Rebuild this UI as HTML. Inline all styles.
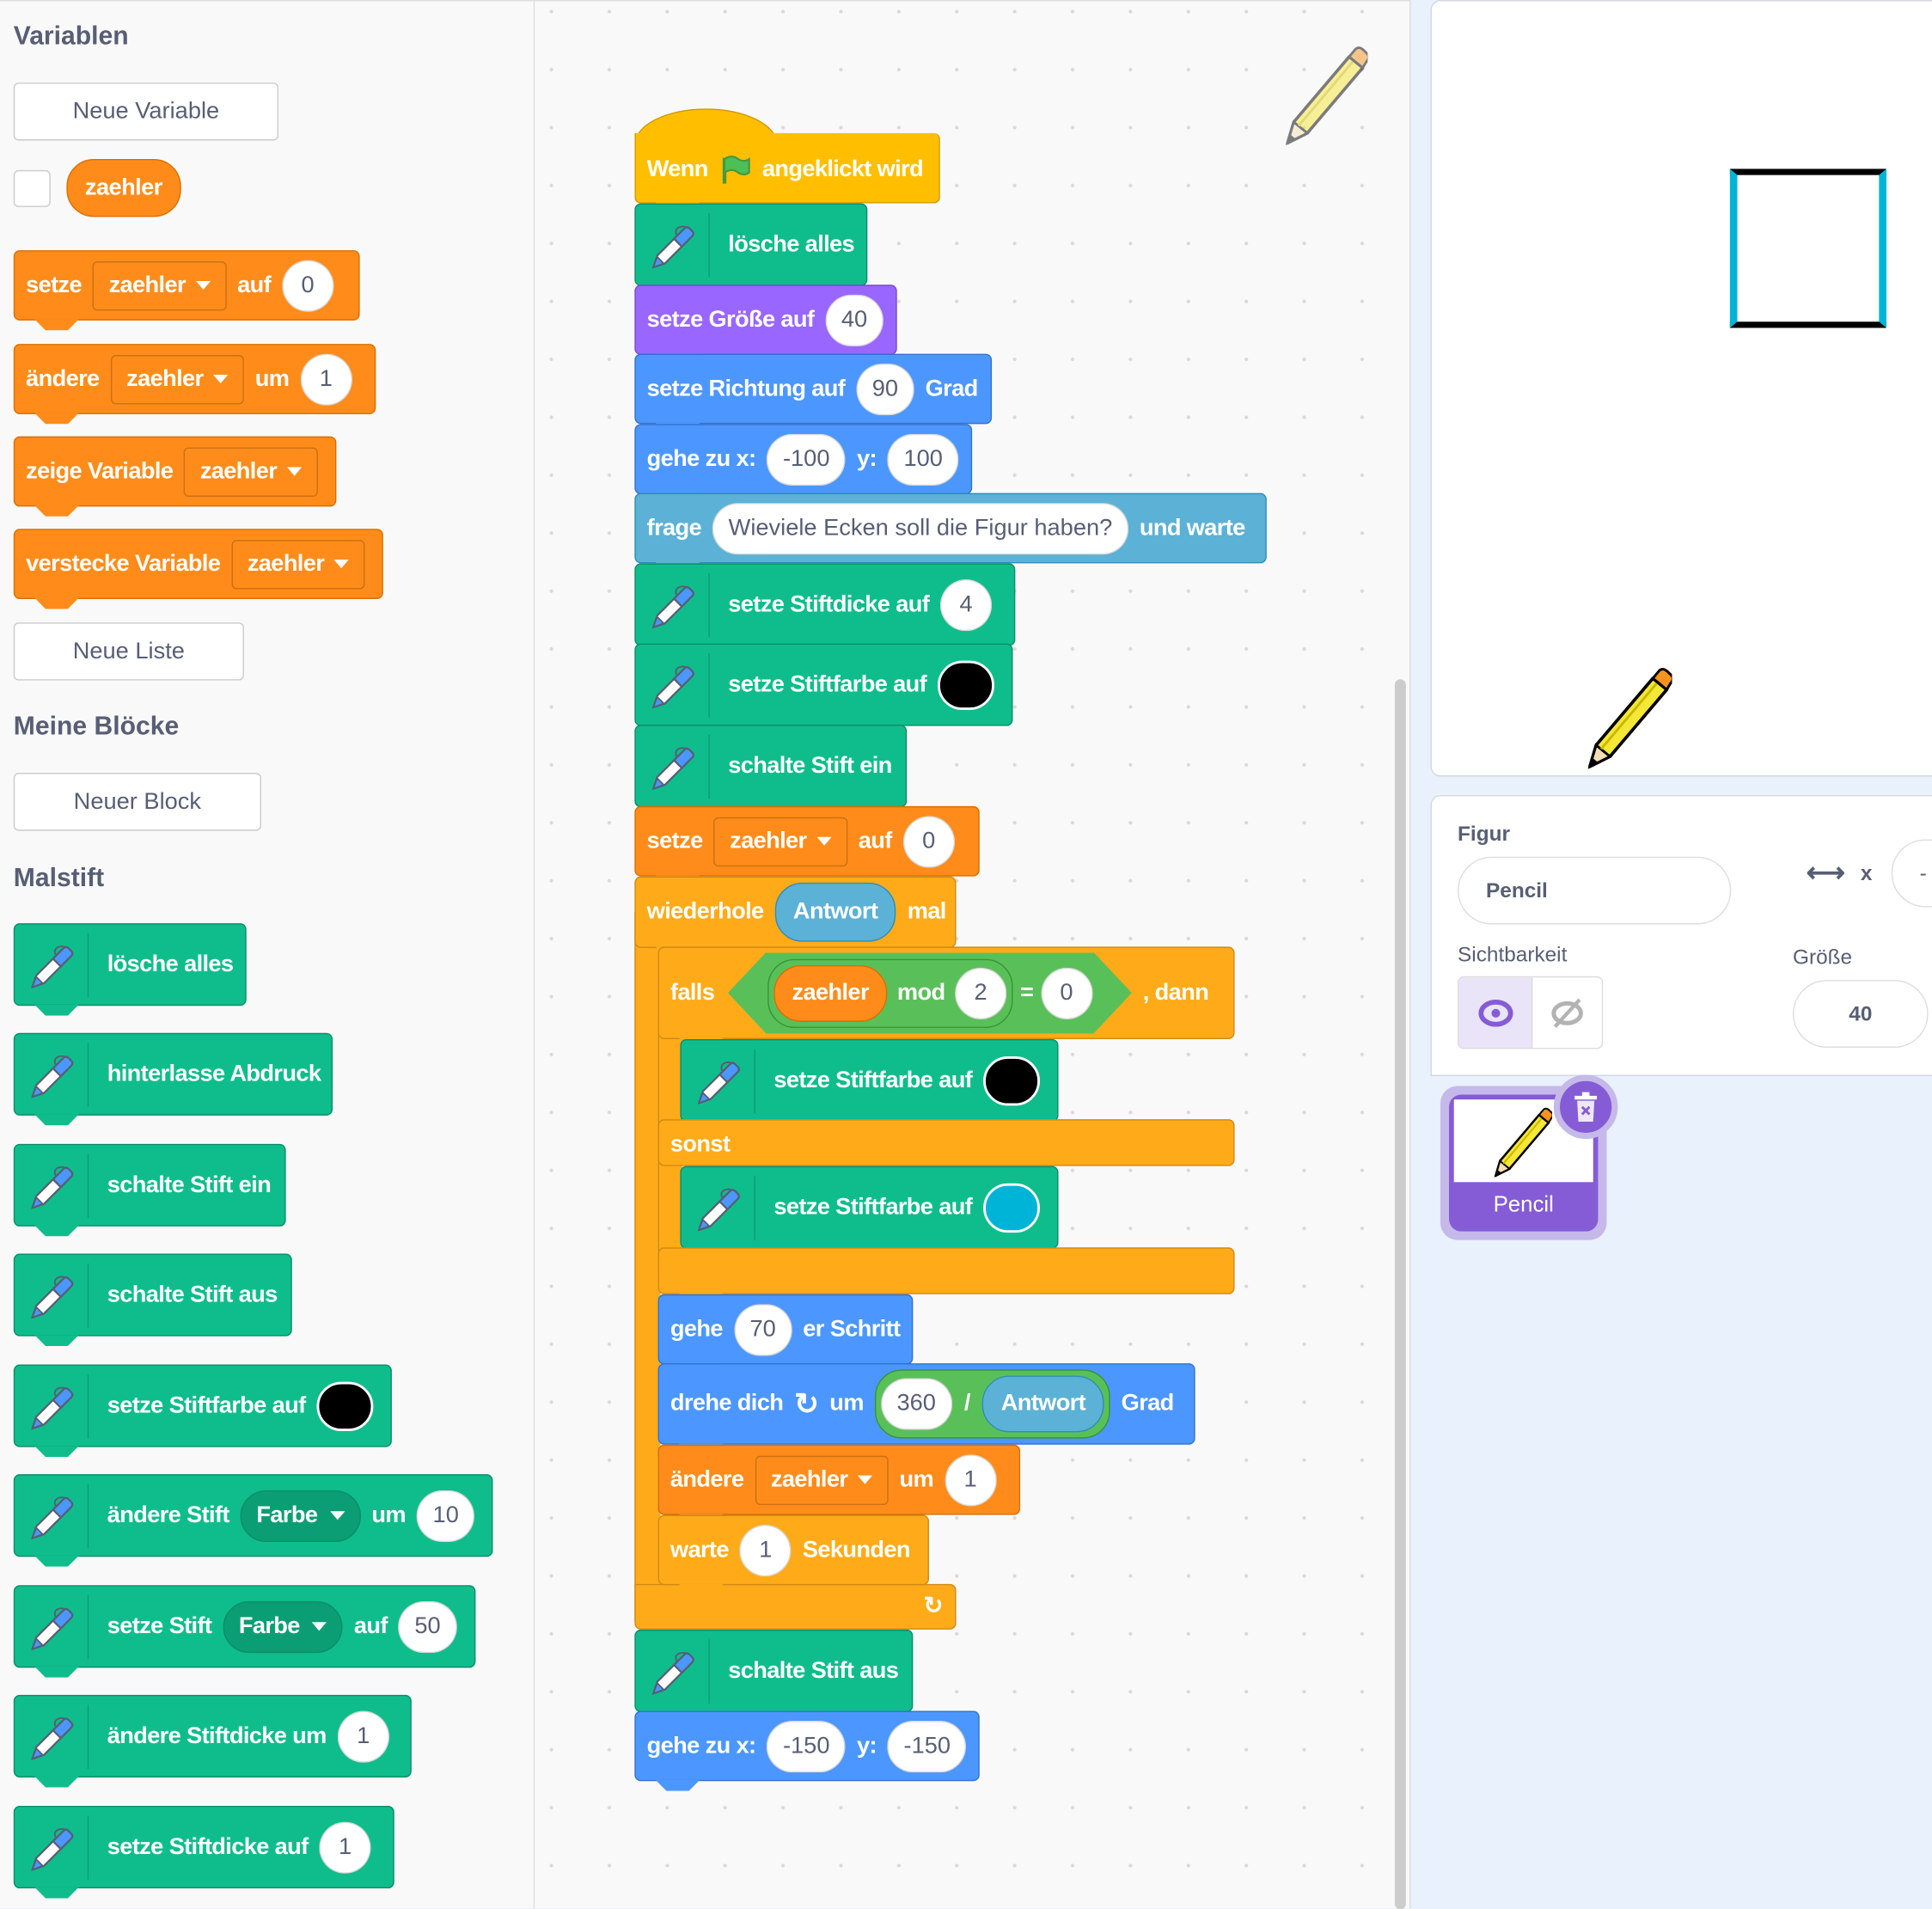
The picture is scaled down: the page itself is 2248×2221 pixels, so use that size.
<!DOCTYPE html>
<html><head><meta charset="utf-8">
<style>
*{box-sizing:border-box;margin:0;padding:0}
html,body{width:2248px;height:2220px;overflow:hidden;background:#e9f1fc}
#w{position:absolute;left:0;top:0;width:1568px;height:1548px;transform:scale(1.43367,1.4341);transform-origin:0 0;font-family:"Liberation Sans",sans-serif;}
.pal{position:absolute;left:0;top:0;width:434px;height:1548px;background:#f9f9f9;border-right:1px solid #ddd;border-top:1px solid #ddd}
.scr{position:absolute;left:434px;top:0;width:711px;height:1548px;background-color:#f9f9f9;background-image:radial-gradient(circle,#d9d9d9 1.3px,transparent 1.6px);background-size:47px 47px;background-position:-10px -15px;border-top:1px solid #ddd;border-right:1px solid #ddd}
.h{position:absolute;left:11px;font-size:21px;font-weight:bold;color:#575e75}
.btn{position:absolute;left:11px;height:47px;background:#fff;border:1px solid #ccc;border-radius:4px;color:#575e75;font-size:19px;display:flex;align-items:center;justify-content:center}
.b{position:absolute;height:57px;border:1px solid;border-radius:5px;color:#fff;font-size:19px;letter-spacing:-0.45px;font-weight:bold;display:flex;align-items:center;padding-left:9px;gap:9px;white-space:nowrap}
.b:after{content:"";position:absolute;left:16px;bottom:-9px;width:36px;height:9px;background:inherit;clip-path:polygon(0 0,100% 0,75% 100%,25% 100%)}
.nn:after{display:none}
.g{background:#0fbd8c;border-color:#0b8e69}
.pen{height:67px;padding-left:0}
.pen .ic{width:60px;height:52px;border-right:1px solid #0b9e74;display:flex;align-items:center;justify-content:center;margin-right:6px}
.o{background:#ff8c1a;border-color:#db6e00}
.p{background:#9966ff;border-color:#774dcb}
.m{background:#4c97ff;border-color:#3373cc}
.s{background:#5cb1d6;border-color:#2e8eb8}
.c{background:#ffab19;border-color:#cf8b17}
.e{background:#ffbf00;border-color:#cc9900}
.in{background:#fff;color:#575e75;border-radius:21px;height:42px;min-width:42px;padding:0 12px;display:flex;align-items:center;justify-content:center;font-weight:normal;font-size:19px;letter-spacing:0;border:1px solid rgba(0,0,0,.15)}
.dd{border:1px solid rgba(0,0,0,.2);background:#ff8c1a;border-radius:4px;height:40px;padding:0 12px;display:flex;align-items:center;gap:8px}
.dd:after,.gd:after{content:"";border-left:6px solid transparent;border-right:6px solid transparent;border-top:7px solid #fff}
.gd{background:#0b9e74;border-radius:21px;height:42px;padding:0 12px;display:flex;align-items:center;gap:10px;border:1px solid #0b8e69}
.blk{width:46px;height:40px;border-radius:20px;background:#000;border:2px solid #fff}
.rep{border-radius:22px;height:46px;padding:0 14px;display:flex;align-items:center;border:1px solid}
</style></head><body><div id="w">
<svg width="0" height="0" style="position:absolute"><defs><symbol id="pn" viewBox="0 0 40 40"><path d="M5 37 L8 28 L27 9 L33 15 L14 34 Z" fill="#fff" stroke="#575e75" stroke-width="1.5" stroke-linejoin="round"/><path d="M21 15 L29 7 Q31 5 33 7 L35 9 Q37 11 35 13 L27 21 Z" fill="#4c97ff" stroke="#575e75" stroke-width="1.5"/><path d="M5 37 L8 29 L13 34 Z" fill="#4c97ff" stroke="#575e75" stroke-width="1.2"/><path d="M23 12 Q21 8 25 6 Q28 5 30 6" fill="none" stroke="#575e75" stroke-width="1.3"/></symbol>
<symbol id="pc" viewBox="0 0 70 85"><path d="M5 82 L10 65 L55 12 L66 21 L21 74 Z" fill="#f4e735" stroke="#000" stroke-width="2.5" stroke-linejoin="round"/><path d="M55 12 L60 6 Q63 3 67 7 L70 10 Q72 13 69 16 L66 21 Z" fill="#f7931e" stroke="#000" stroke-width="2"/><path d="M5 82 L10 65 L21 74 Z" fill="#f5deb3" stroke="#000" stroke-width="2"/><path d="M5 82 L7 75 L12 79Z" fill="#000"/><path d="M14 68 L58 16" stroke="#c9b800" stroke-width="2"/></symbol></defs></svg>

<div class="pal">
<div class="h" style="top:17px">Variablen</div>
<div class="btn" style="top:66px;width:215px">Neue Variable</div>
<div style="position:absolute;left:11px;top:137px;width:30px;height:30px;background:#fff;border:1px solid #ccc;border-radius:4px"></div>
<div class="rep o" style="position:absolute;left:54px;top:128px;height:47px;color:#fff;font-size:19px;font-weight:bold;background:#ff8c1a;border-color:#db6e00;letter-spacing:-0.4px">zaehler</div>
<div class="b o" style="left:11px;top:202px;width:281px">setze <span class="dd">zaehler</span> auf <span class="in">0</span></div>
<div class="b o" style="left:11px;top:278px;width:294px">ändere <span class="dd">zaehler</span> um <span class="in">1</span></div>
<div class="b o" style="left:11px;top:353px;width:262px">zeige Variable <span class="dd">zaehler</span></div>
<div class="b o" style="left:11px;top:428px;width:300px">verstecke Variable <span class="dd">zaehler</span></div>
<div class="btn" style="top:504px;width:187px">Neue Liste</div>
<div class="h" style="top:577px">Meine Blöcke</div>
<div class="btn" style="top:626px;width:201px">Neuer Block</div>
<div class="h" style="top:700px">Malstift</div>
<div class="b g pen" style="left:11px;top:748px;width:189px"><span class="ic"><svg width="42" height="42"><use href="#pn"/></svg></span>lösche alles</div>
<div class="b g pen" style="left:11px;top:837px;width:259px"><span class="ic"><svg width="42" height="42"><use href="#pn"/></svg></span>hinterlasse Abdruck</div>
<div class="b g pen" style="left:11px;top:927px;width:221px"><span class="ic"><svg width="42" height="42"><use href="#pn"/></svg></span>schalte Stift ein</div>
<div class="b g pen" style="left:11px;top:1016px;width:226px"><span class="ic"><svg width="42" height="42"><use href="#pn"/></svg></span>schalte Stift aus</div>
<div class="b g pen" style="left:11px;top:1106px;width:307px"><span class="ic"><svg width="42" height="42"><use href="#pn"/></svg></span>setze Stiftfarbe auf <span class="blk"></span></div>
<div class="b g pen" style="left:11px;top:1195px;width:389px"><span class="ic"><svg width="42" height="42"><use href="#pn"/></svg></span>ändere Stift <span class="gd">Farbe</span> um <span class="in">10</span></div>
<div class="b g pen" style="left:11px;top:1285px;width:375px"><span class="ic"><svg width="42" height="42"><use href="#pn"/></svg></span>setze Stift <span class="gd">Farbe</span> auf <span class="in">50</span></div>
<div class="b g pen" style="left:11px;top:1374px;width:323px"><span class="ic"><svg width="42" height="42"><use href="#pn"/></svg></span>ändere Stiftdicke um <span class="in">1</span></div>
<div class="b g pen" style="left:11px;top:1464px;width:309px"><span class="ic"><svg width="42" height="42"><use href="#pn"/></svg></span>setze Stiftdicke auf <span class="in">1</span></div>
</div>

<div class="scr">
<svg style="position:absolute;left:606px;top:33px;opacity:.5" width="70" height="85"><use href="#pc"/></svg>
<div style="position:absolute;left:698px;top:550px;width:9px;height:998px;background:#ccc;border-radius:5px"></div>
</div>

<div style="position:absolute;left:515px;top:88px;width:116px;height:40px;background:#ffbf00;border-radius:60px 60px 0 0 / 30px 30px 0 0;border:1px solid #cc9900;border-bottom:none"></div>
<div class="b e" style="left:515px;top:108px;width:248px;border-top-left-radius:0;border-top:none;padding-top:4px">Wenn <svg width="26" height="26" viewBox="0 0 26 26"><path d="M4 24 V3" stroke="#45993d" stroke-width="3"/><path d="M4 4 Q10 0 15 4 Q20 7 24 4 V15 Q20 18 15 15 Q10 11 4 15Z" fill="#4cbf56" stroke="#45993d" stroke-width="1.5"/></svg> angeklickt wird</div>
<div class="b g pen" style="left:515px;top:165px;width:189px"><span class="ic"><svg width="42" height="42"><use href="#pn"/></svg></span>lösche alles</div>
<div class="b p" style="left:515px;top:231px;width:213px">setze Größe auf <span class="in">40</span></div>
<div class="b m" style="left:515px;top:287px;width:290px">setze Richtung auf <span class="in">90</span> Grad</div>
<div class="b m" style="left:515px;top:344px;width:274px">gehe zu x: <span class="in">-100</span> y: <span class="in">100</span></div>
<div class="b s" style="left:515px;top:400px;width:513px">frage <span class="in">Wieviele Ecken soll die Figur haben?</span> und warte</div>
<div class="b g pen" style="left:515px;top:457px;width:309px"><span class="ic"><svg width="42" height="42"><use href="#pn"/></svg></span>setze Stiftdicke auf <span class="in">4</span></div>
<div class="b g pen" style="left:515px;top:522px;width:307px"><span class="ic"><svg width="42" height="42"><use href="#pn"/></svg></span>setze Stiftfarbe auf <span class="blk"></span></div>
<div class="b g pen" style="left:515px;top:588px;width:221px"><span class="ic"><svg width="42" height="42"><use href="#pn"/></svg></span>schalte Stift ein</div>
<div class="b o" style="left:515px;top:654px;width:280px">setze <span class="dd">zaehler</span> auf <span class="in">0</span></div>
<div style="position:absolute;left:515px;top:740px;width:21px;height:575px;background:#ffab19;border-left:1px solid #cf8b17"></div>
<div class="b c" style="left:515px;top:711px;width:261px;height:58px">wiederhole <span class="rep s" style="background:#5cb1d6;border-color:#2e8eb8;height:48px">Antwort</span> mal</div>
<div class="b c nn" style="left:515px;top:1285px;width:261px;height:37px;justify-content:flex-end;padding-right:10px;border-top-left-radius:0">↻</div>
<div style="position:absolute;left:534px;top:820px;width:20px;height:215px;background:#ffab19;border-left:1px solid #cf8b17"></div>
<div class="b c" style="left:534px;top:768px;width:468px;height:75px">falls
<span style="position:relative;display:flex;align-items:center;height:66px;background:#59c059;padding:0 32px;clip-path:polygon(0 50%,31px 0,calc(100% - 31px) 0,100% 50%,calc(100% - 31px) 100%,31px 100%);margin-left:2px">
<span class="rep" style="background:#59c059;border-color:#389438;height:56px;padding:0 4px;gap:8px">
<span class="rep o" style="background:#ff8c1a;border-color:#db6e00;height:46px">zaehler</span> mod <span class="in">2</span></span>
<span style="margin:0 6px">=</span><span class="in">0</span></span>, dann</div>
<div class="b g pen" style="left:552px;top:843px;width:307px"><span class="ic"><svg width="42" height="42"><use href="#pn"/></svg></span>setze Stiftfarbe auf <span class="blk"></span></div>
<div class="b c nn" style="left:534px;top:908px;width:468px;height:38px;align-items:flex-start;padding-top:9px">sonst</div>
<div class="b g pen" style="left:552px;top:946px;width:307px"><span class="ic"><svg width="42" height="42"><use href="#pn"/></svg></span>setze Stiftfarbe auf <span class="blk" style="background:#00b4d8"></span></div>
<div class="b c" style="left:534px;top:1012px;width:468px;height:38px"></div>
<div class="b m" style="left:534px;top:1050px;width:207px">gehe <span class="in">70</span> er Schritt</div>
<div class="b m" style="left:534px;top:1106px;width:436px;height:66px">drehe dich <span style="font-size:24px">↻</span> um <span class="rep" style="background:#59c059;border-color:#389438;height:56px;padding:0 4px;gap:10px"><span class="in">360</span> / <span class="rep s" style="background:#5cb1d6;border-color:#2e8eb8;height:46px">Antwort</span></span> Grad</div>
<div class="b o" style="left:534px;top:1172px;width:294px">ändere <span class="dd">zaehler</span> um <span class="in">1</span></div>
<div class="b c" style="left:534px;top:1229px;width:220px">warte <span class="in">1</span> Sekunden</div>
<div class="b g pen" style="left:515px;top:1322px;width:226px"><span class="ic"><svg width="42" height="42"><use href="#pn"/></svg></span>schalte Stift aus</div>
<div class="b m" style="left:515px;top:1388px;width:280px">gehe zu x: <span class="in">-150</span> y: <span class="in">-150</span></div>

<div style="position:absolute;left:1161px;top:0;width:420px;height:630px;background:#fff;border:1px solid #d0d8e4;border-radius:8px"></div>
<div style="position:absolute;left:1404px;top:137px;width:127px;height:129px;border-top:5px solid #000;border-bottom:5px solid #000;border-left:6px solid #00b4d8;border-right:6px solid #00b4d8"></div>
<svg style="position:absolute;left:1285px;top:538px" width="72" height="87"><use href="#pc"/></svg>
<div style="position:absolute;left:1161px;top:645px;width:420px;height:228px;background:#fff;border:1px solid #d0d8e4;border-radius:8px 0 0 0"></div>
<div style="position:absolute;left:1183px;top:667px;font-size:17px;font-weight:bold;color:#575e75">Figur</div>
<div style="position:absolute;left:1183px;top:695px;width:222px;height:55px;border:1px solid #ddd;border-radius:28px;font-size:17px;font-weight:bold;color:#575e75;padding-left:22px;line-height:53px">Pencil</div>
<div style="position:absolute;left:1466px;top:695px;font-size:22px;font-weight:bold;color:#575e75">⟷</div>
<div style="position:absolute;left:1510px;top:699px;font-size:17px;font-weight:bold;color:#575e75">x</div>
<div style="position:absolute;left:1535px;top:681px;width:60px;height:55px;border:1px solid #ddd;border-radius:28px;font-size:17px;color:#575e75;padding-left:22px;line-height:53px">-</div>
<div style="position:absolute;left:1183px;top:765px;font-size:17px;color:#575e75">Sichtbarkeit</div>
<div style="position:absolute;left:1183px;top:792px;width:118px;height:59px;border:1px solid #ddd;border-radius:5px;overflow:hidden;display:flex">
<div style="width:60px;background:#e9e4f8;border-right:1px solid #ddd;display:flex;align-items:center;justify-content:center"><svg width="28" height="22"><ellipse cx="14" cy="11" rx="12" ry="9" fill="none" stroke="#855cd6" stroke-width="4"/><circle cx="14" cy="11" r="3.5" fill="#855cd6"/></svg></div>
<div style="flex:1;display:flex;align-items:center;justify-content:center"><svg width="28" height="26"><ellipse cx="14" cy="13" rx="11" ry="8" fill="none" stroke="#b3b3b3" stroke-width="3.5"/><path d="M4 24 L24 2" stroke="#b3b3b3" stroke-width="3"/></svg></div></div>
<div style="position:absolute;left:1455px;top:767px;font-size:17px;color:#575e75">Größe</div>
<div style="position:absolute;left:1455px;top:795px;width:110px;height:55px;border:1px solid #ddd;border-radius:28px;font-size:17px;font-weight:bold;color:#575e75;text-align:center;line-height:53px">40</div>
<div style="position:absolute;left:1169px;top:881px;width:135px;height:125px;background:#c5b9ea;border-radius:14px"></div>
<div style="position:absolute;left:1176px;top:888px;width:121px;height:111px;background:#855cd6;border-radius:10px;overflow:hidden">
<div style="position:absolute;left:4px;top:4px;width:113px;height:67px;background:#fff"></div>
<svg style="position:absolute;left:34px;top:8px" width="50" height="60" viewBox="0 0 70 85"><use href="#pc"/></svg>
<div style="position:absolute;left:0;top:79px;width:121px;text-align:center;color:#fff;font-size:18px">Pencil</div></div>
<div style="position:absolute;left:1261px;top:872px;width:52px;height:52px;border-radius:50%;background:#855cd6;border:5px solid #c5b9ea;display:flex;align-items:center;justify-content:center"><svg width="22" height="26"><rect x="2" y="4" width="18" height="3" fill="#fff"/><rect x="8" y="1" width="6" height="4" fill="#fff"/><path d="M4 8 H18 L17 25 H5Z" fill="#fff" opacity=".85"/><path d="M8 13 L14 19 M14 13 L8 19" stroke="#855cd6" stroke-width="2"/></svg></div>
</div></body></html>
